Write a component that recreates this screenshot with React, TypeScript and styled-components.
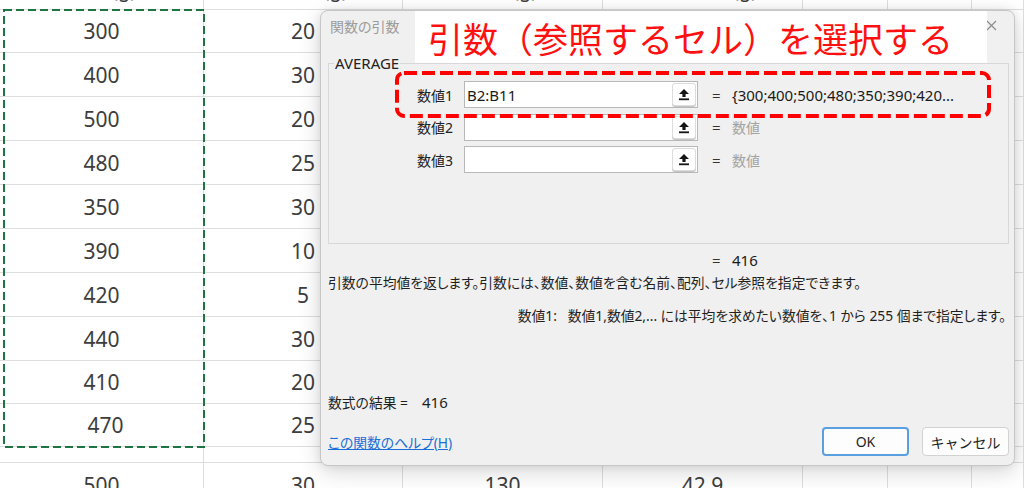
import styled, { createGlobalStyle } from "styled-components";

const GlobalStyle = createGlobalStyle`
  * { box-sizing: border-box; }
  html, body { margin: 0; padding: 0; background: #fff; }
  body { font-family: "Noto Sans", "Noto Sans CJK JP", sans-serif; }
`;

const Page = styled.div`
  position: relative;
  width: 1024px;
  height: 488px;
  overflow: hidden;
  background: #fff;
`;

/* ---------- spreadsheet ---------- */

const Sheet = styled.div`
  display: grid;
  grid-template-columns: 204px 199px 200px 200px 85px 84px 1fr;
`;

const Cell = styled.div<{ $h: number; $shift?: number }>`
  height: ${(p) => p.$h}px;
  border-right: 1px solid #dedede;
  border-bottom: 1px solid #dedede;
  display: flex;
  align-items: center;
  justify-content: center;
  padding-left: ${(p) => p.$shift ?? 0}px;
  font-family: "Noto Sans", sans-serif;
  font-size: 21px;
  color: #3d3d3d;
  overflow: hidden;
`;

const HeaderCell = styled.div`
  height: 10px;
  border-right: 1px solid #dedede;
  border-bottom: 1px solid #dedede;
  overflow: hidden;
  display: flex;
  justify-content: center;
`;

const HeaderText = styled.span`
  display: block;
  margin-top: -22px;
  line-height: 24px;
  font-family: "Noto Sans", "Noto Sans CJK JP", sans-serif;
  font-size: 20px;
  color: #3d3d3d;
  white-space: nowrap;
`;

const Marquee = styled.svg`
  position: absolute;
  left: 3px;
  top: 9px;
`;

/* ---------- dialog ---------- */

const Dialog = styled.div`
  position: absolute;
  left: 320px;
  top: 10px;
  width: 695px;
  height: 456px;
  background: #f0f0f0;
  border: 1px solid #c6c6c6;
  border-radius: 8px;
  box-shadow: 0 6px 22px rgba(0, 0, 0, 0.16), 0 0 8px rgba(0, 0, 0, 0.08);
  padding: 0 5px 0 7px;
  display: flex;
  flex-direction: column;
  font-family: "Noto Sans", "Noto Sans CJK JP", sans-serif;
  color: #1f1f1f;
`;

const TitleBar = styled.div`
  height: 29px;
  display: flex;
  align-items: center;
  justify-content: space-between;
  padding: 0 12px 0 2px;
`;

const Title = styled.span`
  font-family: "Noto Sans CJK JP", sans-serif;
  font-feature-settings: "palt";
  font-size: 14px;
  color: #9b9b9b;
`;

const GroupBox = styled.fieldset`
  margin: 15px 0 0 0;
  height: 189px;
  border: 1px solid #d8d8d8;
  padding: 10px 0 0 0;
`;

const GroupLegend = styled.legend`
  margin-left: 5px;
  padding: 0 1px;
  font-size: 15px;
  line-height: 16px;
  color: #222;
`;

const ArgGrid = styled.div`
  display: grid;
  grid-template-columns: 135px 234px 34px 1fr;
  grid-auto-rows: 27px;
  row-gap: 5.5px;
  align-items: center;
`;

const ArgLabel = styled.span`
  justify-self: end;
  padding-right: 11px;
  font-size: 14px;
  color: #222;
`;

const RefInput = styled.div`
  height: 27px;
  background: #fff;
  border: 1px solid #b8b8b8;
  display: flex;
  align-items: center;
  padding-left: 2px;
  font-size: 15px;
  color: #1a1a1a;
`;

const RefButton = styled.div`
  margin-left: auto;
  margin-right: 1px;
  width: 24px;
  height: 23px;
  background: #fff;
  border: 1px solid #dcdcdc;
  border-radius: 3px;
  box-shadow: 0 1px 0 #c4c4c4;
  display: flex;
  align-items: center;
  justify-content: center;
`;

const Eq = styled.span`
  padding-left: 14px;
  font-size: 15px;
  color: #333;
`;

const ArgValue = styled.span<{ $muted?: boolean }>`
  font-size: ${(p) => (p.$muted ? 14 : 15)}px;
  color: ${(p) => (p.$muted ? "#a3a3a3" : "#1a1a1a")};
  white-space: nowrap;
`;

const ResultGrid = styled(ArgGrid)`
  margin-top: 7px;
  padding-left: 1px;
  grid-auto-rows: 18px;
`;

const TextLine = styled.div<{ $top: number; $right?: boolean }>`
  margin-top: ${(p) => p.$top}px;
  height: 18px;
  line-height: 18px;
  font-size: 13.8px;
  font-feature-settings: "palt";
  text-align: ${(p) => (p.$right ? "right" : "left")};
  padding-right: ${(p) => (p.$right ? 3 : 0)}px;
  color: #1f1f1f;
  white-space: nowrap;
`;

const Num = styled.span<{ $gap?: number }>`
  font-size: 15px;
  margin-left: ${(p) => p.$gap ?? 0}px;
`;

const Footer = styled.div`
  margin-top: 16px;
  height: 29px;
  display: flex;
  align-items: center;
  justify-content: space-between;
`;

const HelpLink = styled.a`
  font-size: 13.8px;
  font-feature-settings: "palt";
  color: #1a6fd6;
  text-decoration: underline;
  cursor: pointer;
`;

const Buttons = styled.div`
  display: flex;
  gap: 13px;
`;

const Button = styled.button<{ $primary?: boolean }>`
  width: 87px;
  height: 29px;
  border-radius: 4px;
  background: #fdfdfd;
  border: ${(p) => (p.$primary ? "2px solid #5a9fe0" : "1px solid #d2d2d2")};
  font-family: "Noto Sans", "Noto Sans CJK JP", sans-serif;
  font-size: 14px;
  color: #1f1f1f;
  padding: 0;
`;

/* ---------- annotations ---------- */

const Callout = styled.div`
  position: absolute;
  left: 415px;
  top: 11px;
  width: 572px;
  height: 52px;
  background: #fff;
  display: flex;
  align-items: center;
  padding-left: 13px;
  font-family: "Noto Sans CJK JP", sans-serif;
  font-size: 35px;
  color: #ff1010;
  white-space: nowrap;
`;

const Highlight = styled.svg`
  position: absolute;
  left: 395px;
  top: 71px;
`;

const colA = [300, 400, 500, 480, 350, 390, 420, 440, 410, 470];
const colB = [20, 30, 20, 25, 30, 10, 5, 30, 20, 25];
const rowH = [43, 44, 44, 44, 44, 44, 44, 44, 43, 43];
const headers = ["重量 (g)", "内容量 (g)", "原価 (g)", "平均重量 (g)", "", "", ""];
const lastRow = ["500", "30", "130", "42.9", "", "", ""];

const UploadIcon = () => (
  <svg width="12" height="13" viewBox="0 0 12 13">
    <path d="M6 1 L11 6 H7.6 V9 H4.4 V6 H1 Z" fill="#151515" />
    <rect x="1" y="10.4" width="10" height="1.8" fill="#151515" />
  </svg>
);

const CloseIcon = () => (
  <svg width="11" height="11" viewBox="0 0 11 11">
    <path d="M1 1 L10 10 M10 1 L1 10" stroke="#8c8c8c" strokeWidth="1.2" />
  </svg>
);

const args = [
  { label: "数値1", value: "B2:B11", result: "{300;400;500;480;350;390;420..." },
  { label: "数値2", value: "", result: "" },
  { label: "数値3", value: "", result: "" },
];

export default function App() {
  return (
    <Page>
      <GlobalStyle />
      <Sheet>
        {headers.map((h, i) => (
          <HeaderCell key={`h${i}`}>
            <HeaderText>{h}</HeaderText>
          </HeaderCell>
        ))}
        {rowH.map((h, r) =>
          Array.from({ length: 7 }).map((_, c) => (
            <Cell key={`${r}-${c}`} $h={h} $shift={r === 9 && c === 0 ? 8 : 0}>
              {c === 0 ? colA[r] : c === 1 ? colB[r] : ""}
            </Cell>
          ))
        )}
        {lastRow.map((_, c) => (
          <Cell key={`gap${c}`} $h={16} />
        ))}
        {lastRow.map((v, c) => (
          <Cell key={`last${c}`} $h={44}>
            {v}
          </Cell>
        ))}
      </Sheet>

      <Marquee width="204" height="441">
        <rect x="1" y="1" width="200" height="437" fill="none" stroke="#1f7443" strokeWidth="2" strokeDasharray="8 4" />
      </Marquee>

      <Dialog>
        <TitleBar>
          <Title>関数の引数</Title>
          <CloseIcon />
        </TitleBar>

        <GroupBox>
          <GroupLegend>AVERAGE</GroupLegend>
          <ArgGrid>
            {args.map((a) => [
              <ArgLabel key={`${a.label}-l`}>{a.label}</ArgLabel>,
              <RefInput key={`${a.label}-i`}>
                {a.value}
                <RefButton>
                  <UploadIcon />
                </RefButton>
              </RefInput>,
              <Eq key={`${a.label}-e`}>=</Eq>,
              <ArgValue key={`${a.label}-v`} $muted={!a.result}>
                {a.result || "数値"}
              </ArgValue>,
            ])}
          </ArgGrid>
        </GroupBox>

        <ResultGrid>
          <span />
          <span />
          <Eq>=</Eq>
          <ArgValue>416</ArgValue>
        </ResultGrid>

        <TextLine $top={5}>
          引数の平均値を返します。引数には、数値、数値を含む名前、配列、セル参照を指定できます。
        </TextLine>
        <TextLine $top={15} $right>
          数値1:&nbsp;&nbsp;&nbsp;数値1,数値2,... には平均を求めたい数値を、1 から 255 個まで指定します。
        </TextLine>
        <TextLine $top={68}>
          数式の結果 =<Num $gap={14}>416</Num>
        </TextLine>

        <Footer>
          <HelpLink>この関数のヘルプ(H)</HelpLink>
          <Buttons>
            <Button $primary>OK</Button>
            <Button>キャンセル</Button>
          </Buttons>
        </Footer>
      </Dialog>

      <Callout>引数（参照するセル）を選択する</Callout>
      <Highlight width="596" height="47">
        <rect x="2" y="2" width="592" height="43" rx="7" fill="none" stroke="#ff0000" strokeWidth="4" strokeDasharray="13 5" />
      </Highlight>
    </Page>
  );
}
